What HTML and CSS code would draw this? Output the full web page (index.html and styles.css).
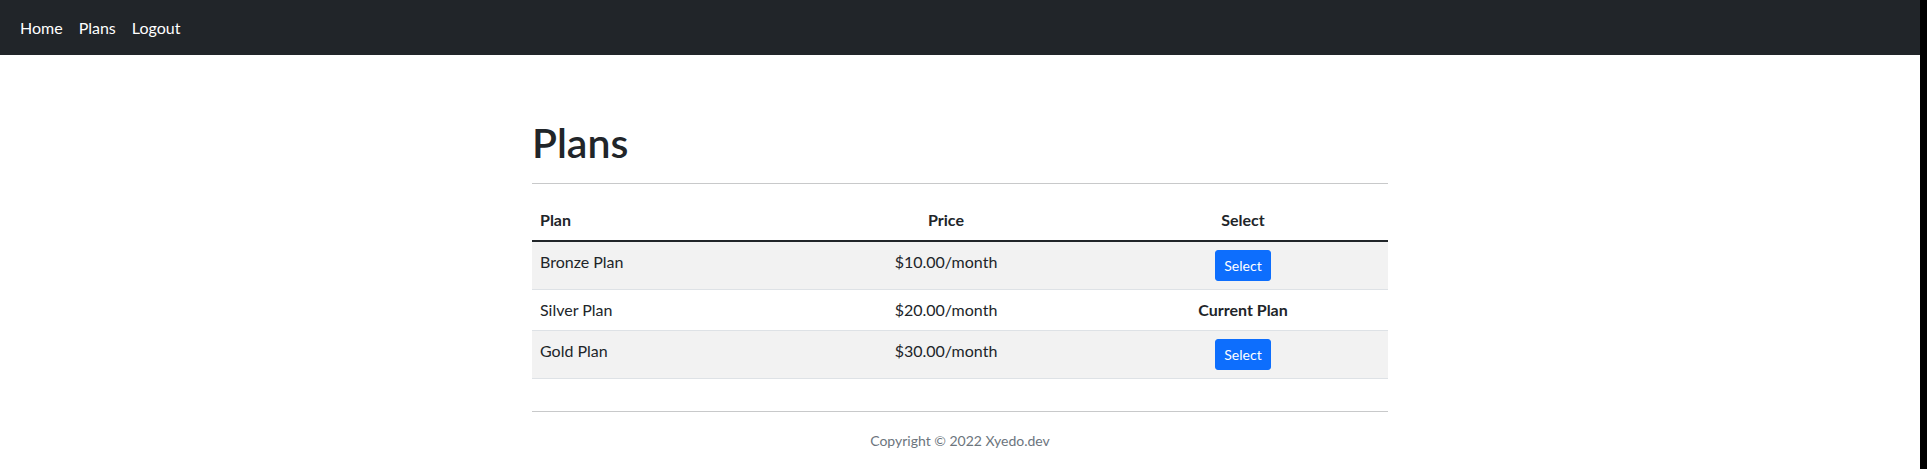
FILE: index.html
```html
<!DOCTYPE html>
<html lang="en">
<head>
<meta charset="utf-8">
<title>Plans</title>
<link rel="stylesheet" href="styles.css">
</head>
<body>
<div class="page">
  <nav class="navbar">
    <a class="nav-link" href="#">Home</a>
    <a class="nav-link" href="#">Plans</a>
    <a class="nav-link" href="#">Logout</a>
  </nav>
  <main class="main">
    <h1 class="title">Plans</h1>
    <hr class="rule">
    <table class="plans">
      <colgroup>
        <col class="col-plan">
        <col class="col-price">
        <col class="col-select">
      </colgroup>
      <thead>
        <tr>
          <th class="left">Plan</th>
          <th class="center">Price</th>
          <th class="center">Select</th>
        </tr>
      </thead>
      <tbody>
        <tr class="odd">
          <td class="left">Bronze Plan</td>
          <td class="center">$10.00/month</td>
          <td class="center"><button class="btn">Select</button></td>
        </tr>
        <tr>
          <td class="left">Silver Plan</td>
          <td class="center">$20.00/month</td>
          <td class="center current">Current Plan</td>
        </tr>
        <tr class="odd">
          <td class="left">Gold Plan</td>
          <td class="center">$30.00/month</td>
          <td class="center"><button class="btn">Select</button></td>
        </tr>
      </tbody>
    </table>
    <footer class="footer">
      <hr class="rule">
      <p class="copy">Copyright © 2022 Xyedo.dev</p>
    </footer>
  </main>
</div>
</body>
</html>
```
FILE: styles.css
```css
html, body {
  margin: 0;
  padding: 0;
  background: #000;
}

body {
  font-family: Lato, "Open Sans", "Liberation Sans", sans-serif;
  font-size: 16px;
  line-height: 1.5;
  color: #212529;
}

.page {
  width: 1920px;
  min-height: 100vh;
  background: #fff;
}

.navbar {
  height: 55px;
  background: #212529;
  display: flex;
  align-items: center;
  padding: 0 12px;
  box-sizing: border-box;
}

.nav-link {
  color: #fff;
  text-decoration: none;
  padding: 0 8px;
  line-height: 24px;
}

.main {
  width: 856px;
  margin: 0 auto;
  padding-top: 64px;
}

.title {
  font-size: 41px;
  font-weight: 600;
  line-height: 48px;
  margin: 0 0 8px;
}

.rule {
  margin: 16px 0;
  border: 0;
  border-top: 1px solid #c8c9ca;
  height: 0;
}

.plans {
  width: 100%;
  border-collapse: collapse;
  table-layout: fixed;
  margin-bottom: 16px;
}

.col-plan { width: 262px; }
.col-price { width: 304px; }
.col-select { width: 290px; }

.plans th,
.plans td {
  padding: 8px;
  vertical-align: top;
  border-bottom: 1px solid #dee2e6;
}

.plans th {
  font-weight: 700;
}

.plans thead th {
  border-bottom: 2px solid #212529;
}

.plans .odd td {
  background: #f2f2f2;
}

.left { text-align: left; }
.center { text-align: center; }

.current {
  font-weight: 700;
}

.btn {
  font-family: inherit;
  font-size: 14px;
  line-height: 21px;
  padding: 4px 8px;
  border: 1px solid #0d6efd;
  border-radius: 3px;
  background: #0d6efd;
  color: #fff;
  display: inline-block;
  vertical-align: top;
  cursor: pointer;
}

.footer {
  display: flow-root;
  padding-bottom: 16px;
}

.copy {
  margin: 0;
  padding-top: 2px;
  text-align: center;
  font-size: 14px;
  line-height: 21px;
  color: #6c757d;
}
```
